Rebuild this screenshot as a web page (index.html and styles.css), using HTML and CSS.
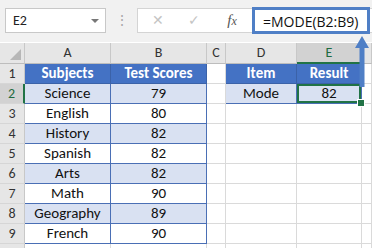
FILE: index.html
```html
<!DOCTYPE html>
<html>

<head>
	<title>MODE function</title>
	<link rel="stylesheet" href="styles.css">
</head>

<body>

	<div class="toolbar">
		<div class="namebox">
			<span>E2</span>
			<span class="caret"></span>
		</div>
		<div class="grip">⋮</div>
		<div class="formulabar">
			<span class="fbtn cancel">✕</span>
			<span class="fbtn ok">✓</span>
			<span class="fbtn fx"><i>f</i><i class="x">x</i></span>
			<div class="formula">=MODE(B2:B9)</div>
		</div>
	</div>

	<div class="sheet">
		<div class="hd corner"><span class="tri"></span></div>
		<div class="hd">A</div>
		<div class="hd">B</div>
		<div class="hd">C</div>
		<div class="hd">D</div>
		<div class="hd active-col">E</div>
		<div class="hd"></div>

		<div class="rh">1</div>
		<div class="c th">Subjects</div>
		<div class="c th">Test Scores</div>
		<div class="c"></div>
		<div class="c th">Item</div>
		<div class="c th">Result</div>
		<div class="c"></div>

		<div class="rh active-row">2</div>
		<div class="c td band">Science</div>
		<div class="c td band">79</div>
		<div class="c"></div>
		<div class="c td band">Mode</div>
		<div class="c td band selected">82<span class="handle"></span></div>
		<div class="c"></div>

		<div class="rh">3</div>
		<div class="c td">English</div>
		<div class="c td">80</div>
		<div class="c"></div>
		<div class="c"></div>
		<div class="c"></div>
		<div class="c"></div>

		<div class="rh">4</div>
		<div class="c td band">History</div>
		<div class="c td band">82</div>
		<div class="c"></div>
		<div class="c"></div>
		<div class="c"></div>
		<div class="c"></div>

		<div class="rh">5</div>
		<div class="c td">Spanish</div>
		<div class="c td">82</div>
		<div class="c"></div>
		<div class="c"></div>
		<div class="c"></div>
		<div class="c"></div>

		<div class="rh">6</div>
		<div class="c td band">Arts</div>
		<div class="c td band">82</div>
		<div class="c"></div>
		<div class="c"></div>
		<div class="c"></div>
		<div class="c"></div>

		<div class="rh">7</div>
		<div class="c td">Math</div>
		<div class="c td">90</div>
		<div class="c"></div>
		<div class="c"></div>
		<div class="c"></div>
		<div class="c"></div>

		<div class="rh">8</div>
		<div class="c td band">Geography</div>
		<div class="c td band">89</div>
		<div class="c"></div>
		<div class="c"></div>
		<div class="c"></div>
		<div class="c"></div>

		<div class="rh">9</div>
		<div class="c td">French</div>
		<div class="c td">90</div>
		<div class="c"></div>
		<div class="c"></div>
		<div class="c"></div>
		<div class="c"></div>

		<div class="rh"></div>
		<div class="c"></div>
		<div class="c"></div>
		<div class="c"></div>
		<div class="c"></div>
		<div class="c"></div>
		<div class="c"></div>
	</div>

	<!-- arrow from the formula to the result cell -->
	<svg class="arrow" width="16" height="52" viewBox="0 0 16 52">
		<path d="M8 1 L15 13 L10.5 13 L10.5 52 L5.5 52 L5.5 13 L1 13 Z" fill="#4f7fc6" />
	</svg>

</body>

</html>
```

FILE: styles.css
```css
body {
	margin: 0px;
	width: 372px;
	height: 248px;
	overflow: hidden;
	background: #ffffff;
	font-family: Carlito, Lato, "Liberation Sans", sans-serif;
	position: relative;
}

.toolbar {
	background: #f1f1f1;
	height: 42px;
	display: flex;
	align-items: flex-start;
	padding-top: 8px;
	box-sizing: border-box;
}

.namebox {
	margin-left: 5px;
	width: 101px;
	height: 25px;
	box-sizing: border-box;
	background: white;
	border: 1px solid #c8c8c8;
	display: flex;
	align-items: center;
	justify-content: space-between;
	padding: 0px 6px 0px 7px;
	font-size: 14px;
	color: #222;
}

.caret {
	width: 0;
	height: 0;
	border-left: 4px solid transparent;
	border-right: 4px solid transparent;
	border-top: 4px solid #777;
}

.grip {
	width: 31px;
	text-align: center;
	color: #a8a8a8;
	font-size: 14px;
	line-height: 25px;
}

.formulabar {
	flex: 1;
	height: 25px;
	box-sizing: border-box;
	background: white;
	border: 1px solid #d4d4d4;
	border-right: none;
	display: flex;
	align-items: center;
}

.fbtn {
	color: #c4c4c4;
	font-size: 14px;
	width: 36px;
	text-align: center;
}

.cancel {
	margin-left: 2px;
}

.fx {
	color: #555;
	font-family: "Liberation Serif", serif;
	font-size: 15px;
	width: 40px;
}

.fx .x {
	font-size: 12px;
}

.formula {
	align-self: stretch;
	margin-top: -2px;
	margin-bottom: -2px;
	width: 118px;
	box-sizing: border-box;
	border: 3px solid #4f7fc6;
	font-family: "Open Sans", sans-serif;
	font-size: 14px;
	color: #111;
	padding-left: 8px;
	line-height: 23px;
	white-space: nowrap;
}

.sheet {
	display: grid;
	grid-template-columns: 25px 86px 96px 19px 71px 65px 10px;
	grid-template-rows: 21px repeat(9, 20px) 5px;
	margin-top: 1px;
}

.hd {
	background: #e6e6e6;
	border-right: 1px solid #c8c8c8;
	border-bottom: 1px solid #bdbdbd;
	box-sizing: border-box;
	text-align: center;
	font-size: 14px;
	line-height: 20px;
	color: #333;
}

.corner {
	position: relative;
}

.tri {
	position: absolute;
	right: 3px;
	bottom: 3px;
	width: 0;
	height: 0;
	border-left: 11px solid transparent;
	border-bottom: 11px solid #b7b7b7;
}

.active-col {
	background: #d2d2d2;
	border-bottom: 2px solid #217346;
	color: #1e6b40;
}

.rh {
	background: #e6e6e6;
	border-right: 1px solid #c8c8c8;
	border-bottom: 1px solid #d6d6d6;
	box-sizing: border-box;
	text-align: center;
	font-size: 14px;
	line-height: 19px;
	color: #333;
}

.active-row {
	background: #d2d2d2;
	border-right: 2px solid #217346;
	color: #1e6b40;
}

.c {
	border-right: 1px solid #dadada;
	border-bottom: 1px solid #dadada;
	box-sizing: border-box;
	text-align: center;
	font-size: 15px;
	line-height: 19px;
	color: #111;
	white-space: nowrap;
	overflow: hidden;
}

.th {
	background: #4472c4;
	color: white;
	font-weight: bold;
	border-right: 1px solid #3b62a8;
	border-bottom: 1px solid #3b62a8;
}

.td {
	border-right: 1px solid #4a6fb5;
	border-bottom: 1px solid #4a6fb5;
}

.band {
	background: #d9e1f2;
}

.selected {
	position: relative;
	overflow: visible;
	box-shadow: inset 0 0 0 2px #217346;
}

.handle {
	position: absolute;
	right: -4px;
	bottom: -4px;
	width: 6px;
	height: 6px;
	background: #217346;
	border: 1px solid white;
}

.arrow {
	position: absolute;
	left: 354px;
	top: 35px;
}
```
